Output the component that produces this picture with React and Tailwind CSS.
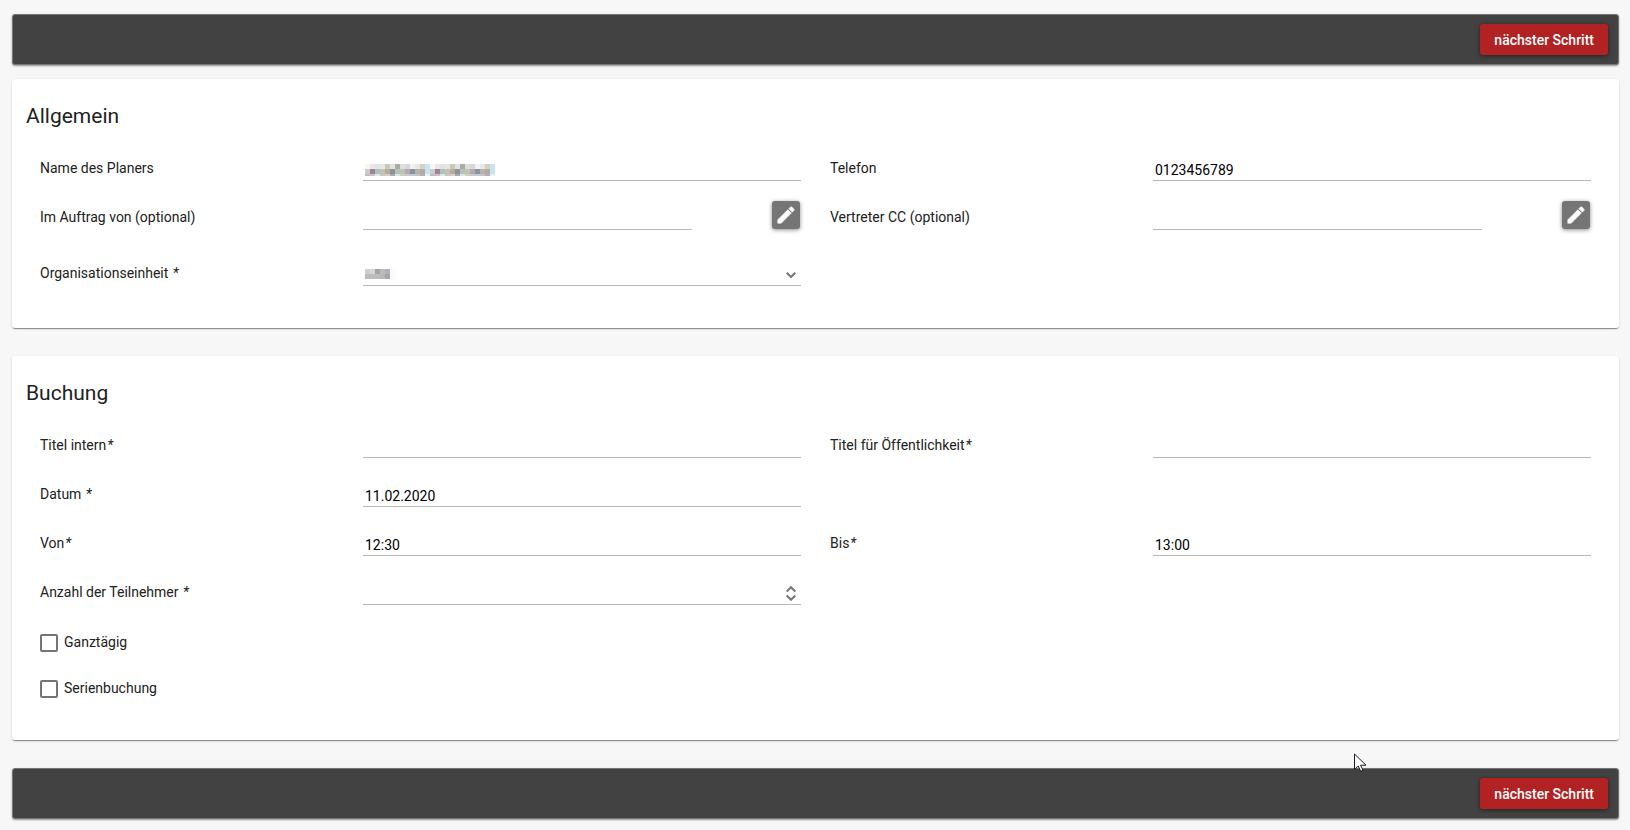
import React, { useState } from "react";

// 5px tiles that hide the planner's name and unit
const NAME_TILES = [
  ["#f6f6f6", "#ece4e8", "#e2e2e4", "#e6e6e2", "#c8c8c0", "#e2e2e2", "#adaba0", "#d8e0e0", "#d8d6de", "#f2f2ee", "#e6e8ee", "#dccfbe", "#c8e4f4"],
  ["#c9cfc0", "#9f8296", "#acc3b8", "#c3c1b8", "#bcab8c", "#8e909c", "#b0c4bc", "#bfc4ad", "#b8a8ac", "#8198a4", "#bab2aa", "#b2aca6", "#c8e4f4"],
  ["#c4bcbc", "#c8c0cc", "#dfe7e3", "#cdc5c0", "#cad2d0", "#a9a9ad", "#dbe4e0", "#c8d0c4", "#c8c8d0", "#c4cacc", "#c8c2c4", "#b4b0ae", "#e4f2fa"],
];

const UNIT_TILES = [
  ["#d4d0c8", "#d0d6da", "#a6a4a2", "#c0bab4", "#aeb2be", "#f6fbff"],
  ["#bebab4", "#babebe", "#c0bab8", "#b4b8c0", "#aaa2a8", "#f6fbff"],
];

function Tiles({ rows, repeat = 1, height }) {
  const width = rows[0].length * repeat * 5;
  return (
    <svg
      width={width}
      height={height}
      shapeRendering="crispEdges"
      aria-hidden="true"
      className="pointer-events-none absolute top-3 left-0.5"
    >
      {rows.map((row, y) =>
        Array.from({ length: repeat }).flatMap((_, r) =>
          row.map((fill, x) => (
            <rect
              key={`${y}-${r}-${x}`}
              x={(r * row.length + x) * 5}
              y={y * 5}
              width="5"
              height="5"
              fill={fill}
            />
          ))
        )
      )}
    </svg>
  );
}

function Toolbar({ children }) {
  return (
    <div className="relative flex h-[51px] items-center justify-end rounded-[3px] border border-[#757575] bg-[#424242] px-2.5 shadow-[0_1px_2px_rgba(0,0,0,0.4)]">
      <button
        type="button"
        className="h-[31px] rounded-[3px] bg-[#b22222] px-3.5 text-sm font-medium text-white shadow-[0_1px_4px_rgba(0,0,0,0.5)]"
      >
        nächster Schritt
      </button>
      {children}
    </div>
  );
}

function Card({ title, children }) {
  return (
    <section className="rounded-[3px] bg-white px-3.5 pt-6 pb-[42px] shadow-[0_2px_1px_-1px_rgba(0,0,0,0.3),0_1px_1px_rgba(0,0,0,0.14),0_1px_3px_rgba(0,0,0,0.12)]">
      <h2 className="mb-[23px] text-[21px] leading-[26px]">{title}</h2>
      <div className="flex flex-col gap-5 px-3.5">{children}</div>
    </section>
  );
}

function Row({ children }) {
  return <div className="grid grid-cols-2 gap-x-[29px]">{children}</div>;
}

function Field({ id, label, star, children }) {
  return (
    <div className="grid grid-cols-[323fr_438fr]">
      <label htmlFor={id} className="pt-[5px] text-sm leading-[22px]">
        {label}
        {star && <em className="ml-px">*</em>}
      </label>
      <div className="relative flex items-start justify-between">{children}</div>
    </div>
  );
}

const inputClass =
  "h-[29px] w-full appearance-none border-b border-[#b9b9b9] bg-transparent px-0.5 pt-2 text-sm text-black outline-none";

function TextInput(props) {
  return <input type="text" className={inputClass} {...props} />;
}

function PickerInput({ id, title }) {
  return (
    <>
      <input
        id={id}
        type="text"
        readOnly
        className="h-[29px] w-3/4 border-b border-[#b9b9b9] bg-transparent px-0.5 pt-2 text-sm outline-none"
      />
      <button
        type="button"
        aria-label={title}
        className="mr-px flex size-7 items-center justify-center rounded-[3px] bg-[#757575] text-white shadow-[0_1px_4px_rgba(0,0,0,0.45)]"
      >
        <svg
          width="22"
          height="22"
          viewBox="0 0 24 24"
          fill="currentColor"
          stroke="currentColor"
          strokeWidth="0.6"
        >
          <path d="M3 17.25V21h3.75L17.81 9.94l-3.75-3.75L3 17.25zM20.71 7.04a1 1 0 0 0 0-1.41l-2.34-2.34a1 1 0 0 0-1.41 0l-1.83 1.83 3.75 3.75 1.83-1.83z" />
        </svg>
      </button>
    </>
  );
}

function Checkbox({ id, label, checked, onChange }) {
  return (
    <div className="flex h-[26px] items-center gap-1.5">
      <input
        id={id}
        type="checkbox"
        checked={checked}
        onChange={(e) => onChange(e.target.checked)}
        className="size-[18px] appearance-none rounded-[2px] border-2 border-[#757575] checked:bg-[#757575]"
      />
      <label htmlFor={id} className="pb-0.5 text-sm leading-5">
        {label}
      </label>
    </div>
  );
}

export default function App() {
  const [phone, setPhone] = useState("0123456789");
  const [titleIntern, setTitleIntern] = useState("");
  const [titlePublic, setTitlePublic] = useState("");
  const [date, setDate] = useState("11.02.2020");
  const [from, setFrom] = useState("12:30");
  const [to, setTo] = useState("13:00");
  const [count, setCount] = useState("");
  const [allDay, setAllDay] = useState(false);
  const [series, setSeries] = useState(false);

  return (
    <div className="min-h-screen bg-[#f7f7f7] pt-3.5 pr-[11px] pb-2.5 pl-3 font-['Roboto',sans-serif] text-[#212121]">
      <Toolbar />

      <form className="mt-3.5 mb-7 flex flex-col gap-7">
        <Card title="Allgemein">
          <Row>
            <Field id="planner" label="Name des Planers">
              <TextInput id="planner" readOnly />
              <Tiles rows={NAME_TILES} repeat={2} height={12} />
            </Field>
            <Field id="phone" label="Telefon">
              <TextInput
                id="phone"
                value={phone}
                onChange={(e) => setPhone(e.target.value)}
              />
            </Field>
          </Row>

          <div className="pb-[7px]">
            <Row>
              <Field id="behalf" label="Im Auftrag von (optional)">
                <PickerInput id="behalf" title="Auftraggeber bearbeiten" />
              </Field>
              <Field id="deputy" label="Vertreter CC (optional)">
                <PickerInput id="deputy" title="Vertreter bearbeiten" />
              </Field>
            </Row>
          </div>

          <Row>
            <Field id="unit" label="Organisationseinheit " star>
              <select id="unit" className={inputClass}>
                <option></option>
              </select>
              <Tiles rows={UNIT_TILES} height={10} />
              <svg
                width="10"
                height="6"
                viewBox="0 0 10 6"
                fill="none"
                stroke="#757575"
                strokeWidth="2"
                className="pointer-events-none absolute right-[5px] bottom-2"
              >
                <path d="M.7.7 5 5 9.300.7" />
              </svg>
            </Field>
          </Row>
        </Card>

        <Card title="Buchung">
          <Row>
            <Field id="title-intern" label="Titel intern" star>
              <TextInput
                id="title-intern"
                value={titleIntern}
                onChange={(e) => setTitleIntern(e.target.value)}
              />
            </Field>
            <Field id="title-public" label="Titel für Öffentlichkeit" star>
              <TextInput
                id="title-public"
                value={titlePublic}
                onChange={(e) => setTitlePublic(e.target.value)}
              />
            </Field>
          </Row>

          <Row>
            <Field id="date" label="Datum " star>
              <TextInput
                id="date"
                value={date}
                onChange={(e) => setDate(e.target.value)}
              />
            </Field>
          </Row>

          <Row>
            <Field id="from" label="Von" star>
              <TextInput
                id="from"
                value={from}
                onChange={(e) => setFrom(e.target.value)}
              />
            </Field>
            <Field id="to" label="Bis" star>
              <TextInput
                id="to"
                value={to}
                onChange={(e) => setTo(e.target.value)}
              />
            </Field>
          </Row>

          <Row>
            <Field id="count" label="Anzahl der Teilnehmer " star>
              <TextInput
                id="count"
                inputMode="numeric"
                value={count}
                onChange={(e) => setCount(e.target.value)}
              />
              <svg
                width="10"
                height="15"
                viewBox="0 0 10 15"
                fill="none"
                stroke="#757575"
                strokeWidth="2"
                className="pointer-events-none absolute right-[5px] bottom-1"
              >
                <path d="M.7 5.500 5 1.200 9.300 5.500M.7 9.500 5 13.800 9.300 9.500" />
              </svg>
            </Field>
          </Row>

          <div className="-mb-1 flex flex-col gap-5 pt-[5px]">
            <Checkbox
              id="all-day"
              label="Ganztägig"
              checked={allDay}
              onChange={setAllDay}
            />
            <Checkbox
              id="series"
              label="Serienbuchung"
              checked={series}
              onChange={setSeries}
            />
          </div>
        </Card>
      </form>

      <Toolbar>
        {/* mouse pointer */}
        <svg
          width="13"
          height="19"
          viewBox="0 0 13 19"
          aria-hidden="true"
          className="pointer-events-none absolute -top-4 right-[251px]"
        >
          <path
            d="M.5 1v15.500l3.700-3.500 2.500 5.300 2.300-1-2.400-5.100h5.400z"
            fill="#fff"
            stroke="#1a1a2a"
            strokeWidth="1"
          />
        </svg>
      </Toolbar>
    </div>
  );
}
